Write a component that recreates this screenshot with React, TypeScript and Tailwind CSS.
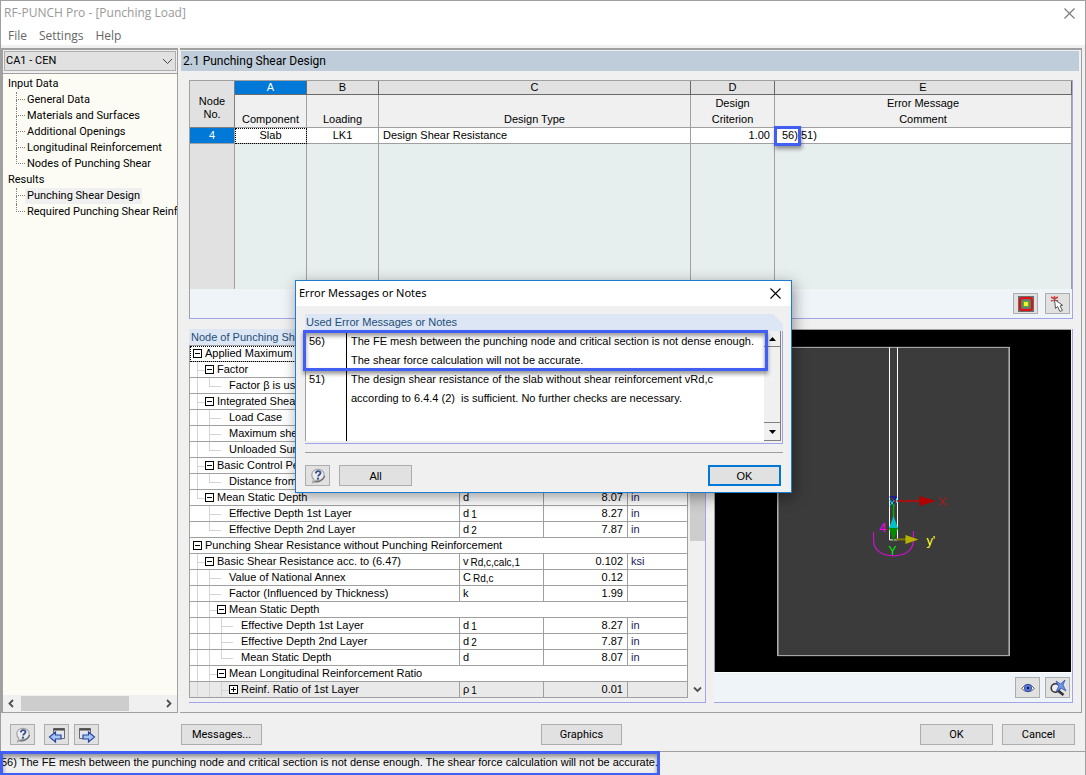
import type { ReactNode } from 'react'
import clsx from 'clsx'

const INPUT_ITEMS = [
  'General Data',
  'Materials and Surfaces',
  'Additional Openings',
  'Longitudinal Reinforcement',
  'Nodes of Punching Shear'
]
const RESULT_ITEMS = ['Punching Shear Design', 'Required Punching Shear Reinforcement']

interface DetailRow {
  // one letter per 12px guide cell: v line, t tee, l corner, h dash, b minus box, p plus box
  guides: string
  label: string
  symbol?: string
  sub?: string
  value?: string
  unit?: string
}

const DETAILS: DetailRow[] = [
  { guides: 'b', label: 'Applied Maximum Shear Force' },
  { guides: 'tb', label: 'Factor' },
  { guides: 'vlh', label: 'Factor β is used' },
  { guides: 'tb', label: 'Integrated Shear Force' },
  { guides: 'vth', label: 'Load Case' },
  { guides: 'vth', label: 'Maximum shear force' },
  { guides: 'vlh', label: 'Unloaded Surface' },
  { guides: 'tb', label: 'Basic Control Perimeter' },
  { guides: 'vlh', label: 'Distance from Node' },
  { guides: 'lb', label: 'Mean Static Depth', symbol: 'd', value: '8.07', unit: 'in' },
  { guides: ' th', label: 'Effective Depth 1st Layer', symbol: 'd', sub: '1', value: '8.27', unit: 'in' },
  { guides: ' lh', label: 'Effective Depth 2nd Layer', symbol: 'd', sub: '2', value: '7.87', unit: 'in' },
  { guides: 'b', label: 'Punching Shear Resistance without Punching Reinforcement' },
  { guides: 'tb', label: 'Basic Shear Resistance acc. to (6.47)', symbol: 'v', sub: 'Rd,c,calc,1', value: '0.102', unit: 'ksi' },
  { guides: 'vth', label: 'Value of National Annex', symbol: 'C', sub: 'Rd,c', value: '0.12', unit: '' },
  { guides: 'vth', label: 'Factor (Influenced by Thickness)', symbol: 'k', value: '1.99', unit: '' },
  { guides: 'vtb', label: 'Mean Static Depth' },
  { guides: 'vvth', label: 'Effective Depth 1st Layer', symbol: 'd', sub: '1', value: '8.27', unit: 'in' },
  { guides: 'vvth', label: 'Effective Depth 2nd Layer', symbol: 'd', sub: '2', value: '7.87', unit: 'in' },
  { guides: 'vvlh', label: 'Mean Static Depth', symbol: 'd', value: '8.07', unit: 'in' },
  { guides: 'vtb', label: 'Mean Longitudinal Reinforcement Ratio' },
  { guides: 'vvtp', label: 'Reinf. Ratio of 1st Layer', symbol: 'ρ', sub: '1', value: '0.01', unit: '' }
]

const GUIDE_PATHS: Record<string, string> = {
  v: 'M6.5 0V15',
  t: 'M6.5 0V15M6.5 8.5H12',
  l: 'M6.5 0V8.5H12',
  h: 'M0 8.5H6',
  b: 'M0 8.5H2',
  p: 'M0 8.5H2'
}

function Guide({ kind, first }: { kind: string; first: boolean }) {
  const box = kind === 'b' || kind === 'p'
  return (
    <svg width="12" height="15" viewBox="0 0 12 15" fill="none" className="shrink-0" shapeRendering="crispEdges">
      {!(box && first) && <path d={GUIDE_PATHS[kind]} stroke="#d4d4d4" />}
      {box && <rect x="2.5" y="3.5" width="8" height="8" fill="#fff" stroke="#000" />}
      {box && <path d={kind === 'p' ? 'M4 7.5H9M6.5 5V10' : 'M4 7.5H9'} stroke="#000" />}
    </svg>
  )
}

function HelpIcon() {
  return (
    <svg width="16" height="16" viewBox="0 0 18 18">
      <path d="M2 7.5C2 4 5 1.5 9 1.5s7 2.7 7 6.3-3 6.4-6.5 6.4c-1 0-1.6-.1-2.3-.4L3 16.500l1.200-3.800C2.800 11.500 2 9.700 2 7.500z" fill="#ececef" stroke="#a2a2a2" strokeWidth="1.300" />
      <path d="M5 15.500c5 .8 10-1.500 11.500-6.500" fill="none" stroke="#6c6c6c" strokeWidth="1.400" />
      <path d="M6.500 6c.2-1.900 1.300-2.500 2.700-2.500 1.600 0 2.600.9 2.600 2.200 0 1.900-2.600 2-2.600 4" fill="none" stroke="#34508f" strokeWidth="2" />
      <circle cx="9" cy="12" r="1.300" fill="#34508f" />
    </svg>
  )
}

function PageIcon({ forward }: { forward?: boolean }) {
  return (
    <svg width="18" height="18" viewBox="0 0 18 18">
      {forward ? (
        <>
          <path d="M1.500 2.500h11v10h-11z" fill="#e4e6ea" stroke="#6b6b6b" />
          <path d="M1.500 3.500h11" stroke="#4a4a4a" strokeWidth="2" />
          <path d="M5 9h5.500V6l6 5-6 5v-3H5z" fill="#a9c4f2" stroke="#2447a5" strokeWidth="1.200" />
        </>
      ) : (
        <>
          <path d="M5.500 2.500h11v10h-11z" fill="#e4e6ea" stroke="#6b6b6b" />
          <path d="M5.500 3.500h11" stroke="#4a4a4a" strokeWidth="2" />
          <path d="M13 9H7.500V6l-6 5 6 5v-3H13z" fill="#a9c4f2" stroke="#2447a5" strokeWidth="1.200" />
        </>
      )}
    </svg>
  )
}

function ContourIcon() {
  return (
    <svg width="16" height="16" viewBox="0 0 16 16">
      <rect width="16" height="16" fill="#6b6b6b" />
      <rect x="2" y="2" width="12" height="12" rx="2.500" fill="#747474" stroke="#e01010" strokeWidth="2" />
      <rect x="5.500" y="5.500" width="5" height="5" fill="#f8f020" stroke="#35c035" />
    </svg>
  )
}

function PickIcon() {
  return (
    <svg width="16" height="16" viewBox="0 0 16 16">
      <path d="M1 1l7 4M8 1L1 5M4.500 0v6" stroke="#d04040" strokeWidth="1.500" />
      <path d="M4.500 3.500l1 9 2-2 2.500 5 2.500-1.200-2.500-4.300 2.500-.8z" fill="#fff" stroke="#555" />
    </svg>
  )
}

function EyeIcon() {
  return (
    <svg width="16" height="16" viewBox="0 0 16 16">
      <path d="M1.500 8.500Q8 0 14.500 8.500Q8 15 1.500 8.500z" fill="#f4f4f8" stroke="#666" />
      <circle cx="8" cy="8" r="3.600" fill="#5c7ee4" stroke="#2f4aa8" />
      <circle cx="8" cy="8" r="1.300" fill="#0b1748" />
    </svg>
  )
}

function ZoomResetIcon() {
  return (
    <svg width="18" height="18" viewBox="0 0 18 18">
      <circle cx="6.500" cy="9" r="4.300" fill="#eee" stroke="#333" strokeWidth="1.600" />
      <path d="M9.500 12l5 4" stroke="#333" strokeWidth="2.600" />
      <path d="M7 2l4.500 3L16 1l-2 5 3 6-5-3-5 4 2.500-5.500z" fill="#6f97e6" stroke="#2f52ad" strokeWidth=".8" />
    </svg>
  )
}

function CloseIcon({ color }: { color: string }) {
  return (
    <svg width="11" height="11" viewBox="0 0 11 11">
      <path d="M.5.5l10 10M10.500.5l-10 10" stroke={color} strokeWidth="1.100" />
    </svg>
  )
}

function Chevron({ d }: { d: string }) {
  return (
    <svg width="9" height="9" viewBox="0 0 9 9" fill="none">
      <path d={d} stroke="#505050" strokeWidth="1.800" />
    </svg>
  )
}

function IconButton({ label, children }: { label: string; children: ReactNode }) {
  return (
    <button aria-label={label} className="flex h-[21px] w-[25px] items-center justify-center border border-[#adadad] bg-[#e1e1e1]">
      {children}
    </button>
  )
}

function PushButton({ children, className }: { children: ReactNode; className: string }) {
  return (
    <button className={clsx('h-[21px] bg-[#e1e1e1] pt-px text-center', className)}>{children}</button>
  )
}

function TreeGroup({ title, items, active }: { title: string; items: string[]; active?: string }) {
  return (
    <li>
      <div className="pl-[5px]">{title}</div>
      <ul className="pl-[13px]">
        {items.map((item, i) => (
          <li key={item} className="flex h-4 whitespace-nowrap">
            <span className="flex w-[9px] shrink-0 flex-col">
              <span className="h-2 border-b border-l border-dotted border-[#808080]" />
              {i < items.length - 1 && <span className="h-2 border-l border-dotted border-[#808080]" />}
            </span>
            <a href="#" className={clsx('px-[2px]', item === active && 'bg-[#f0f0f0]')}>{item}</a>
          </li>
        ))}
      </ul>
    </li>
  )
}

function Sidebar() {
  return (
    <aside className="flex w-[177px] shrink-0 flex-col border-2 border-r border-b border-[#a0a0a0] bg-[#f0f0f0]">
      <div className="relative m-px">
        <select aria-label="Design case" className="h-5 w-full appearance-none border border-[#adadad] bg-[#e1e1e1] pt-px pl-px">
          <option>CA1 - CEN</option>
        </select>
        <span className="pointer-events-none absolute top-1.5 right-1">
          <svg width="9" height="9" viewBox="0 0 9 9" fill="none"><path d="M0 2l4.500 4.500L9 2" stroke="#444" /></svg>
        </span>
      </div>
      <nav className="mt-px flex-1 overflow-hidden border-t border-[#a0a0a0] bg-[#fcfcf4] pt-[2px] leading-4">
        <ul>
          <TreeGroup title="Input Data" items={INPUT_ITEMS} />
          <TreeGroup title="Results" items={RESULT_ITEMS} active="Punching Shear Design" />
        </ul>
      </nav>
      <div className="mb-px flex h-4 items-center bg-[#f0f0f0] px-1">
        <Chevron d="M6 1L2.500 4.500L6 8" />
        <span className="ml-[5px] h-[15px] w-[108px] bg-[#cdcdcd]" />
        <span className="ml-auto"><Chevron d="M3 1l3.500 3.500L3 8" /></span>
      </div>
    </aside>
  )
}

const COLUMNS = ['A', 'B', 'C', 'D', 'E']

function DesignTable() {
  return (
    <section className="border-t border-l border-t-[#a0a0a0] border-l-[#a0a0a0] border-r border-b border-r-[#a4a4e8] border-b-[#a4a4e8] font-['Liberation_Sans',sans-serif]">
      <table className="w-full table-fixed border-separate border-spacing-0 text-center [&_td]:p-0 [&_th]:p-0 [&_th]:font-normal">
        <colgroup>
          <col className="w-[45px]" />
          <col className="w-[72px]" />
          <col className="w-[72px]" />
          <col className="w-[312px]" />
          <col className="w-[84px]" />
          <col />
        </colgroup>
        <thead>
          <tr>
            <th rowSpan={2} className="border-r border-b border-[#808080] bg-[#e1e1e1] leading-[13px]">
              <div className="pt-2">Node<br />No.</div>
            </th>
            {COLUMNS.map((name, i) => (
              <th
                key={name}
                className={clsx(
                  'h-[14px] border-r border-b border-[#696969] leading-[13px]',
                  i === 0 ? 'bg-[#0078d7] text-white' : 'bg-[#e1e1e1]'
                )}
              >
                {name}
              </th>
            ))}
          </tr>
          <tr className="leading-4 [&>th]:h-[33px] [&>th]:border-b [&>th]:border-r [&>th]:border-[#a0a0a0] [&>th]:align-bottom">
            <th>Component</th>
            <th>Loading</th>
            <th>Design Type</th>
            <th>Design<br />Criterion</th>
            <th>Error Message<br />Comment</th>
          </tr>
        </thead>
        <tbody>
          <tr className="bg-white leading-[15px] [&>td]:h-4 [&>td]:border-b [&>td]:border-r [&>td]:border-[#a0a0a0]">
            <td className="bg-[#0078d7] text-white">4</td>
            <td className="outline-1 -outline-offset-1 outline-dotted outline-black">Slab</td>
            <td>LK1</td>
            <td><div className="pl-1 text-left">Design Shear Resistance</div></td>
            <td><div className="pr-1 text-right">1.00</div></td>
            <td>
              <div className="relative pl-[7px] text-left">
                56) 51)
                <span className="absolute -top-[2px] -left-px h-5 w-[27px] border-3 border-[#425ff5] shadow-[1px_3px_4px_rgba(0,0,0,0.4)]" />
              </div>
            </td>
          </tr>
          <tr className="bg-[#e7eeee] [&>td]:h-[145px] [&>td]:border-r [&>td]:border-[#a0a0a0]">
            <td className="bg-[#e1e1e1]" />
            <td />
            <td />
            <td />
            <td />
            <td />
          </tr>
        </tbody>
      </table>
      <div className="flex h-[29px] items-center justify-end gap-[7px] bg-[#eff4f9] pr-[2px]">
        <IconButton label="Show contour"><ContourIcon /></IconButton>
        <IconButton label="Pick node"><PickIcon /></IconButton>
      </div>
    </section>
  )
}

function DetailTable() {
  return (
    <section className="flex w-[517px] shrink-0 flex-col border-r border-b border-[#a4a4e8] font-['Liberation_Sans',sans-serif]">
      <h2 className="h-4 bg-[#dce6f4] pl-[2px] leading-4 text-[#1f4e79]">Node of Punching Shear No. 4</h2>
      <div className="flex flex-1 pb-1">
        <table className="h-0 w-[499px] table-fixed border-separate border-spacing-0 border-t border-l border-[#a0a0a0] bg-white leading-[15px] [&_td]:border-r [&_td]:border-b [&_td]:border-[#a0a0a0] [&_td]:p-0">
          <colgroup>
            <col className="w-[270px]" />
            <col className="w-[84px]" />
            <col className="w-[84px]" />
            <col />
          </colgroup>
          <tbody>
            {DETAILS.map((row, i) => (
              <tr key={i} className={clsx('h-4', row.guides.endsWith('p') && 'bg-[#e9e9e9]')}>
                <td
                  colSpan={row.symbol ? 1 : 4}
                  className={clsx(i === 0 && 'outline-1 -outline-offset-1 outline-dotted outline-black')}
                >
                  <div className="flex h-[15px] pl-px whitespace-nowrap">
                    {row.guides.split('').map((kind, g) => (
                      <Guide key={g} kind={kind} first={g === 0} />
                    ))}
                    <span className="pl-[2px]">{row.label}</span>
                  </div>
                </td>
                {row.symbol && (
                  <>
                    <td>
                      <div className="flex h-[15px] gap-[2px] pl-[3px]">
                        {row.symbol}
                        {row.sub && <span className="pt-px text-[10px]">{row.sub}</span>}
                      </div>
                    </td>
                    <td><div className="pr-1 text-right">{row.value}</div></td>
                    <td className="text-[#1a1a5e]"><div className="h-[15px] pl-[3px]">{row.unit}</div></td>
                  </>
                )}
              </tr>
            ))}
          </tbody>
        </table>
        <div className="ml-px flex flex-1 flex-col items-center justify-between">
          <span className="h-[196px] w-[15px] bg-[#cdcdcd]" />
          <span className="pb-1"><Chevron d="M1 2.500L4.500 6L8 2.500" /></span>
        </div>
      </div>
    </section>
  )
}

function GraphicView() {
  return (
    <section className="flex min-w-0 flex-1 flex-col border-r border-b border-[#a4a4e8]">
      <div className="mr-px flex min-h-0 flex-1 border-t border-l border-[#a0a0a0] bg-black">
        <svg viewBox="0 0 357 342" className="h-[342px] w-full" fontFamily="'Liberation Sans', sans-serif" fontSize="13">
          <rect x="63" y="17" width="232" height="309" fill="#3b3b3b" stroke="#fff" />
          <path d="M62.500 17h233M62.500 326h233" stroke="#a0a0a0" />
          <path d="M175 17v193M183 17v193M175 210h8" stroke="#fff" />
          <path d="M159 202v8c0 10 8 16 20 16s20-6 20-16v-9" fill="none" stroke="#d010d0" strokeWidth="1.200" />
          <path d="M179 171h26" stroke="#d00000" strokeWidth="1.500" />
          <path d="M205 166l17 5-17 5z" fill="#b00000" />
          <path d="M225 167l7 9M232 167l-7 9" stroke="#d01010" />
          <path d="M175 167h7l-6 8" fill="none" stroke="#0000e0" />
          <path d="M175 170l5 6M180 170l-5 6M182 168v5" stroke="#00e0ff" />
          <path d="M179 174v14" stroke="#00b000" strokeWidth="1.500" />
          <path d="M179 186l4.500 12h-9z" fill="#00c0c0" />
          <path d="M174.500 198h9l-4.500 14z" fill="#008a00" />
          <path d="M181 209.500h11" stroke="#807a00" strokeWidth="2" />
          <path d="M191 205l13 4.500-13 4.500z" fill="#b8b000" />
          <text x="165" y="202" fill="#ff00ff" fontSize="12">4</text>
          <text x="174" y="225" fill="#00f000" fontSize="12">Y</text>
          <text x="212" y="215" fill="#ffff20">y'</text>
        </svg>
      </div>
      <div className="flex h-[30px] items-center justify-end gap-[5px] border-t border-white bg-[#eff4f9] pr-[2px]">
        <IconButton label="Visibility"><EyeIcon /></IconButton>
        <IconButton label="Reset zoom"><ZoomResetIcon /></IconButton>
      </div>
    </section>
  )
}

function NotesDialog() {
  return (
    <div
      role="dialog"
      aria-label="Error Messages or Notes"
      className="absolute top-[279px] left-[294px] w-[497px] border border-[#1c7cd0] bg-[#f0f0f0] font-['Liberation_Sans',sans-serif] shadow-[2px_4px_14px_rgba(0,0,0,0.4)]"
    >
      <div className="flex h-[25px] items-center justify-between bg-white pr-[10px] pl-[3px] font-['Noto_Sans','Liberation_Sans',sans-serif]">
        <h2>Error Messages or Notes</h2>
        <button aria-label="Close"><CloseIcon color="#000" /></button>
      </div>
      <div className="pt-2 pr-2 pb-[6px] pl-[9px]">
        <h3 className="h-[17px] bg-[#dce6f4] pl-px leading-[17px] text-[#1f4e79] [clip-path:polygon(0_0,calc(100%-10px)_0,100%_10px,100%_100%,0_100%)]">
          Used Error Messages or Notes
        </h3>
        <div className="relative flex h-[113px] border-r border-b border-[#a4a4e8] pr-px pb-[2px]">
          <dl className="grid flex-1 grid-cols-[41px_1fr] grid-rows-[38px_1fr] border-l border-[#a0a0a0] bg-white pt-px leading-[19px]">
            <dt className="border-r border-black pl-[3px]">56)</dt>
            <dd className="pl-1">
              The FE mesh between the punching node and critical section is not dense enough.
              <br />
              The shear force calculation will not be accurate.
            </dd>
            <dt className="border-r border-black pl-[3px]">51)</dt>
            <dd className="pl-1">
              The design shear resistance of the slab without shear reinforcement vRd,c
              <br />
              according to 6.4.4 (2)&nbsp; is sufficient. No further checks are necessary.
            </dd>
          </dl>
          <div className="flex w-[17px] flex-col">
            <span className="flex h-4 items-center justify-center border-r border-b border-[#808080]">
              <svg width="7" height="4" viewBox="0 0 7 4"><path d="M0 4L3.500 0L7 4z" /></svg>
            </span>
            <span className="flex-1 border-r border-b border-[#808080]" />
            <span className="flex h-[18px] items-center justify-center border-r border-b border-[#808080]">
              <svg width="7" height="4" viewBox="0 0 7 4"><path d="M0 0h7L3.500 4z" /></svg>
            </span>
          </div>
          <span className="absolute -top-px -left-[2px] h-[41px] w-[465px] border-3 border-[#425ff5] shadow-[0_3px_4px_rgba(0,0,0,0.4),inset_0_3px_4px_rgba(0,0,0,0.4)]" />
        </div>
        <hr className="mt-2 border-[#a0a0a0]" />
        <div className="flex gap-[9px] pt-3 pr-[2px]">
          <IconButton label="Help"><HelpIcon /></IconButton>
          <PushButton className="w-[73px] border border-[#adadad]">All</PushButton>
          <PushButton className="ml-auto w-[73px] border-2 border-[#0078d7]">OK</PushButton>
        </div>
      </div>
    </div>
  )
}

export default function App() {
  return (
    <div className="relative flex min-h-screen flex-col border border-[#a0a0a0] bg-[#f0f0f0] font-['Roboto','Liberation_Sans',sans-serif] text-[11px] text-black">
      <header className="bg-white font-['Open_Sans','Liberation_Sans',sans-serif] text-xs">
        <div className="flex h-6 items-center justify-between pr-[10px] pl-[3px] text-[#999]">
          <h1>RF-PUNCH Pro - [Punching Load]</h1>
          <button aria-label="Close window"><CloseIcon color="#777" /></button>
        </div>
        <nav className="flex h-5 items-center gap-3 pt-[2px] pl-[7px] text-[#666]">
          <button>File</button>
          <button>Settings</button>
          <button>Help</button>
        </nav>
      </header>

      <div className="flex flex-1 gap-[2px] pt-[3px] pr-[3px]">
        <Sidebar />
        <main className="flex min-w-0 flex-1 flex-col border-t-2 border-r border-b border-[#a0a0a0] pb-[9px]">
          <h2 className="mt-px mr-[2px] ml-px h-5 bg-[#bfcdda] pl-[2px] text-xs leading-5">
            2.1 Punching Shear Design
          </h2>
          <div className="flex flex-1 flex-col gap-[10px] pt-[9px] pr-2 pl-[9px]">
            <DesignTable />
            <div className="flex flex-1 gap-2">
              <DetailTable />
              <GraphicView />
            </div>
          </div>
        </main>
      </div>

      <footer>
        <div className="flex h-[38px] items-center pt-[5px] pr-[10px] pl-[9px]">
          <div className="flex gap-[5px]">
            <span className="mr-1"><IconButton label="Help"><HelpIcon /></IconButton></span>
            <IconButton label="Previous page"><PageIcon /></IconButton>
            <IconButton label="Next page"><PageIcon forward /></IconButton>
          </div>
          <PushButton className="ml-[82px] w-[81px] border border-[#adadad]">Messages...</PushButton>
          <PushButton className="ml-[279px] w-[81px] border border-[#adadad]">Graphics</PushButton>
          <PushButton className="ml-auto w-[73px] border border-[#adadad]">OK</PushButton>
          <PushButton className="ml-[9px] w-[73px] border border-[#adadad]">Cancel</PushButton>
        </div>
        <div className="relative border-t border-[#a0a0a0] pt-px pb-1 font-['Liberation_Sans',sans-serif]">
          <p className="leading-[18px] whitespace-nowrap">
            56) The FE mesh between the punching node and critical section is not dense enough. The shear force calculation will not be accurate.
          </p>
          <span className="absolute -top-px -left-px h-[25px] w-[660px] border-3 border-[#425ff5] shadow-[inset_0_3px_4px_rgba(0,0,0,0.4)]" />
        </div>
      </footer>
      <NotesDialog />
    </div>
  )
}
